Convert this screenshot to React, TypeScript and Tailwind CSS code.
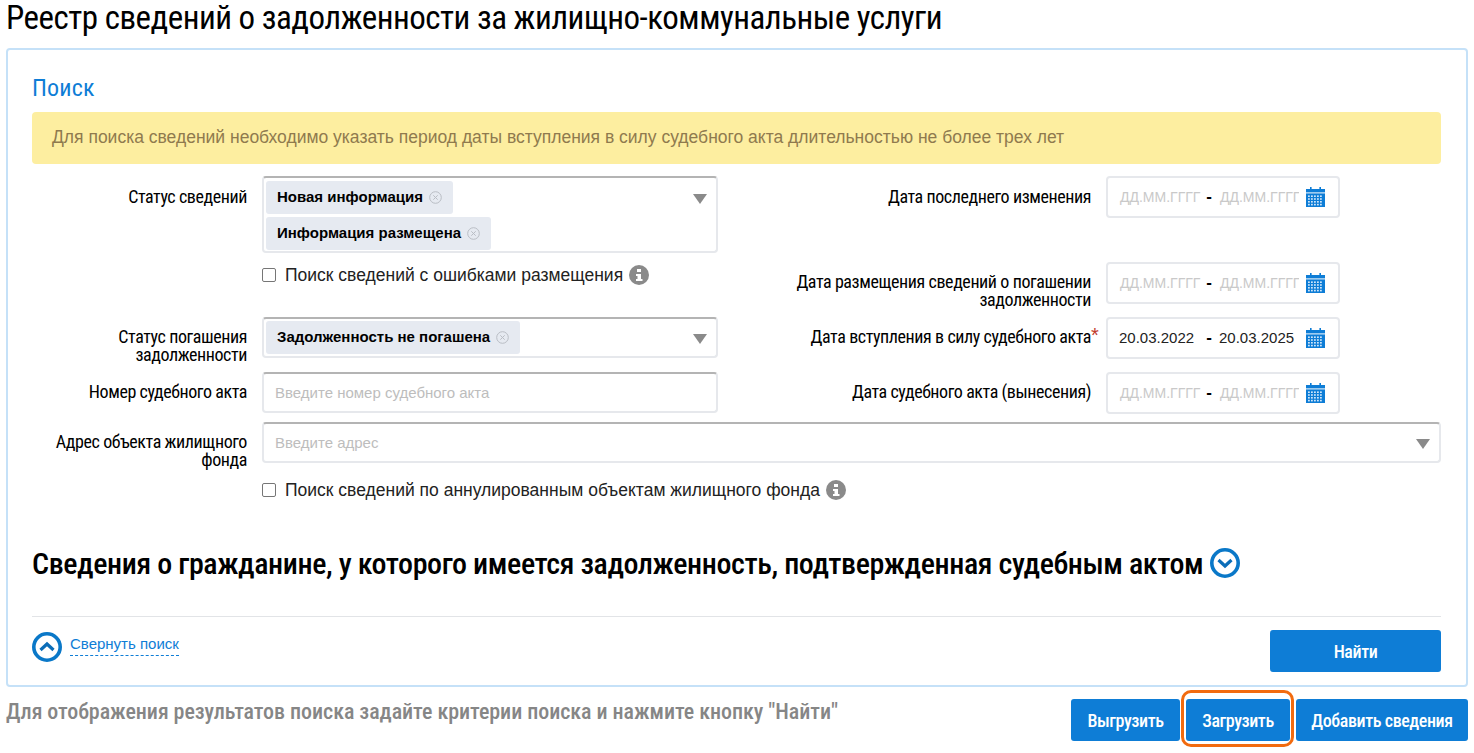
import React from "react";

const roboto = "font-['Roboto_Condensed',Roboto,sans-serif]";
const arial = "font-['Liberation_Sans',Arial,sans-serif]";

function Caret({ className = "" }: { className?: string }) {
  return <div className={`w-0 h-0 border-x-[7.5px] border-x-transparent border-t-[10px] border-t-[#8a8a8a] ${className}`} />;
}

function Info() {
  return (
    <svg width="20" height="20" viewBox="0 0 20 20" className="shrink-0">
      <circle cx="10" cy="10" r="10" fill="#8a8a8a" />
      <rect x="8" y="4" width="4" height="3" fill="#fff" />
      <path d="M7 9h5v5h1.5v2h-6.5v-2h1.5v-3h-1.5z" fill="#fff" />
    </svg>
  );
}

function Calendar() {
  return (
    <svg width="19" height="20" viewBox="0 0 19 20" className="shrink-0">
      <rect x="4" y="0" width="1.6" height="3" fill="#0e7dd6" />
      <rect x="13.4" y="0" width="1.6" height="3" fill="#0e7dd6" />
      <rect x="0" y="2" width="19" height="3.4" fill="#0e7dd6" />
      <rect x="0" y="6.4" width="19" height="13.6" fill="#0e7dd6" />
      {[8.4, 11.2, 14, 16.8].map((y) =>
        [2, 5, 8, 11, 14].map((x) => <rect key={`${x}-${y}`} x={x} y={y} width="1.8" height="1.6" fill="#cfe6fa" />)
      )}
    </svg>
  );
}

function Tag({ text }: { text: string }) {
  return (
    <div className="inline-flex items-center h-[33px] pl-[11px] pr-[11px] bg-[#e6eaf1] rounded-[3px]">
      <span className={`${arial} font-bold text-[15px] text-black`}>{text}</span>
      <svg width="13" height="13" viewBox="0 0 13 13" className="ml-[6px]" fill="none" stroke="#b9bdc4" strokeWidth="1">
        <circle cx="6.5" cy="6.5" r="5.8" />
        <path d="M4.3 4.3l4.4 4.4M8.7 4.3l-4.4 4.4" />
      </svg>
    </div>
  );
}

function Label({ children, className = "" }: { children: React.ReactNode; className?: string }) {
  return (
    <div className={`${roboto} whitespace-nowrap text-[18px] leading-[18px] tracking-[-0.42px] text-black text-right ${className}`}>
      {children}
    </div>
  );
}

function DateField({ from, to }: { from?: string; to?: string }) {
  const cls = from ? "text-[#222] text-[15px]" : "text-[#c9c9c9] text-[14px] pl-[1px]";
  return (
    <div className="w-[234px] h-[42px] flex items-center border-2 border-[#e6e8ec] rounded-[4px] pl-[11px] pr-[13px]">
      <span className={`${arial} ${cls} w-[83px] whitespace-nowrap overflow-hidden`}>{from ?? "ДД.ММ.ГГГГ"}</span>
      <span className={`${arial} font-bold text-black text-[17px] w-[14px] text-center`}>-</span>
      <span className={`${arial} ${cls} w-[80px] ml-[3px] whitespace-nowrap overflow-hidden`}>{to ?? "ДД.ММ.ГГГГ"}</span>
      <div className="ml-auto"><Calendar /></div>
    </div>
  );
}

function Check({ text }: { text: string }) {
  return (
    <div className="flex items-center h-[24px]">
      <span className="w-[14px] h-[14px] border border-[#767676] rounded-[2px] bg-white mr-[9px] shrink-0" />
      <span className={`${arial} text-[17.5px] text-[#222] whitespace-nowrap`}>{text}</span>
      <span className="ml-[6px]"><Info /></span>
    </div>
  );
}

function Circle({ up }: { up?: boolean }) {
  return (
    <svg width="30" height="30" viewBox="0 0 30 30" fill="none" className="shrink-0">
      <circle cx="15" cy="15" r="13.2" stroke="#0a78c8" strokeWidth="3.6" />
      <path d={up ? "M8.5 18l6.5-6 6.5 6" : "M8.5 12l6.5 6 6.5-6"} stroke="#0b6db8" strokeWidth="3.2" />
    </svg>
  );
}

function Btn({ children, className = "" }: { children: React.ReactNode; className?: string }) {
  return (
    <div className={`h-[42px] flex items-center justify-center bg-[#0e7dd6] rounded-[3px] ${className}`}>
      <span className={`${roboto} whitespace-nowrap text-white text-[18px] tracking-[-0.42px] font-medium`}>{children}</span>
    </div>
  );
}

const boxCls = "border-2 border-[#e6e8ec] border-t-[#b4b4b4] rounded-[4px]";

export default function App() {
  return (
    <div className="w-[1474px] h-[753px] overflow-hidden bg-white px-[6px]">
      <h1 className={`${roboto} h-[48px] text-[33px] leading-[35px] tracking-[-0.5px] text-black whitespace-nowrap`}>
        Реестр сведений о задолженности за жилищно-коммунальные услуги
      </h1>

      <div className="w-[1462px] h-[639px] border-2 border-[#c5e1f8] rounded-[4px] pl-[24px] pr-[25px] pt-[24px]">
        <div className={`${roboto} text-[24px] tracking-[0.2px] leading-[28px] h-[38px] text-[#0e7dd6]`}>Поиск</div>
        <div className={`${arial} h-[52px] flex items-center px-[20px] pb-[2px] bg-[#fdeea0] rounded-[4px] text-[17.5px] text-[#8f7a4e]`}>
          Для поиска сведений необходимо указать период даты вступления в силу судебного акта длительностью не более трех лет
        </div>

        <div className="flex mt-[12px]">
          <div className="w-[686px]">
            <div className="flex">
              <Label className="w-[215px] pt-[12px]">Статус сведений</Label>
              <div className={`relative w-[456px] h-[77px] ml-[15px] pl-[2px] pt-[3px] flex flex-col items-start gap-[3px] ${boxCls}`}>
                <Tag text="Новая информация" />
                <Tag text="Информация размещена" />
                <Caret className="absolute right-[9px] top-[16px]" />
              </div>
            </div>
            <div className="ml-[230px] mt-[10px]">
              <Check text="Поиск сведений с ошибками размещения" />
            </div>
            <div className="flex mt-[30px] h-[41px]">
              <Label className="w-[215px] pt-[11px]">Статус погашения<br />задолженности</Label>
              <div className={`w-[456px] h-[41px] ml-[15px] pl-[2px] flex items-center justify-between pr-[9px] ${boxCls}`}>
                <Tag text="Задолженность не погашена" />
                <Caret className="mt-[2px]" />
              </div>
            </div>
            <div className="flex mt-[14px]">
              <Label className="w-[215px] pt-[11px]">Номер судебного акта</Label>
              <div className={`${arial} w-[456px] h-[41px] ml-[15px] pl-[11px] pt-[2px] flex items-center text-[15px] text-[#bdbdbd] ${boxCls}`}>
                Введите номер судебного акта
              </div>
            </div>
          </div>

          <div className="w-[622px]">
            <div className="flex">
              <Label className="w-[373px] pt-[12px]">Дата последнего изменения</Label>
              <div className="ml-[15px]"><DateField /></div>
            </div>
            <div className="flex mt-[44px] h-[42px]">
              <Label className="w-[373px] pt-[11px]">Дата размещения сведений о погашении<br />задолженности</Label>
              <div className="ml-[15px]"><DateField /></div>
            </div>
            <div className="flex mt-[13px] h-[42px]">
              <Label className="w-[373px] pt-[11px]">Дата вступления в силу судебного акта</Label>
              <div className="relative ml-[15px]">
                <span className={`${arial} absolute left-[-15px] top-[3px] text-[#c0392b] text-[20px]`}>*</span>
                <DateField from="20.03.2022" to="20.03.2025" />
              </div>
            </div>
            <div className="flex mt-[13px] h-[42px]">
              <Label className="w-[373px] pt-[11px]">Дата судебного акта (вынесения)</Label>
              <div className="ml-[15px]"><DateField /></div>
            </div>
          </div>
        </div>

        <div className="flex mt-[8px] h-[41px]">
          <Label className="w-[215px] pt-[11px]">Адрес объекта жилищного<br />фонда</Label>
          <div className={`${arial} flex-1 h-[41px] ml-[15px] pl-[11px] pr-[9px] flex items-center justify-between text-[15px] text-[#bdbdbd] ${boxCls}`}>
            <span className="mt-[2px]">Введите адрес</span>
            <Caret className="mt-[2px]" />
          </div>
        </div>
        <div className="ml-[230px] mt-[15px]">
          <Check text="Поиск сведений по аннулированным объектам жилищного фонда" />
        </div>

        <div className="flex items-center h-[40px] mt-[41px]">
          <span className={`${roboto} font-medium text-[30px] tracking-[-0.41px] text-black whitespace-nowrap`}>
            Сведения о гражданине, у которого имеется задолженность, подтвержденная судебным актом
          </span>
          <span className="ml-[7px]"><Circle /></span>
        </div>

        <div className="mt-[33px] border-t border-[#e2e4e7] pt-[13px] flex items-start justify-between">
          <div className="flex items-center mt-[2px]">
            <Circle up />
            <span className={`${arial} ml-[8px] text-[15px] leading-[22px] text-[#0e7dd6] border-b border-dashed border-[#0e7dd6] mb-[5px]`}>
              Свернуть поиск
            </span>
          </div>
          <Btn className="w-[171px]">Найти</Btn>
        </div>
      </div>

      <div className="flex items-start justify-between w-[1462px] mt-[12px]">
        <div className={`${roboto} text-[22px] leading-[26px] tracking-[-0.05px] font-medium text-[#868686] whitespace-nowrap`}>
          Для отображения результатов поиска задайте критерии поиска и нажмите кнопку "Найти"
        </div>
        <div className="flex items-center">
          <Btn className="w-[109px]">Выгрузить</Btn>
          <div className="relative ml-[6px]">
            <Btn className="w-[104px]">Загрузить</Btn>
            <div className="absolute inset-[-9px_-4px_-6px_-5px] border-[3px] border-[#f26b0f] rounded-[10px]" />
          </div>
          <Btn className="w-[172px] ml-[6px]">Добавить сведения</Btn>
        </div>
      </div>
    </div>
  );
}
